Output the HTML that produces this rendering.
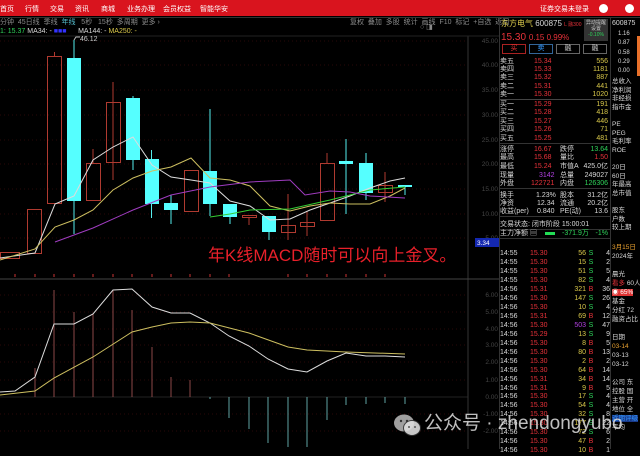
<!DOCTYPE html>
<html><head><meta charset="utf-8"><style>
*{margin:0;padding:0;box-sizing:border-box}
body{width:640px;height:449px;background:#000;position:relative;overflow:hidden;font-family:"Liberation Sans","Noto Sans CJK SC",sans-serif;color:#ccc;font-size:7px}
.a{position:absolute;white-space:nowrap;line-height:1}
.top{position:absolute;left:0;top:0;width:640px;height:16px;background:#d9141e}
.top span{position:absolute;top:4px;color:#fff;font-size:7px}
.r{color:#e8323a}.g{color:#2fd35a}.y{color:#d9c84a}.w{color:#d8d8d8}.gr{color:#8a8a8a}.p{color:#b040e0}
.row{position:absolute;left:500px;width:110px;height:9px}
.row span{position:absolute;top:0;line-height:9px;font-size:7px}
</style></head><body>
<div class="top">
<span style="left:0">首页</span><span style="left:25px">行情</span><span style="left:50px">交易</span><span style="left:75px">资讯</span><span style="left:101px">商城</span><span style="left:127px">业务办理</span><span style="left:163px">会员权益</span><span style="left:200px">智能华安</span>
<span style="left:540px">证券交易未登录</span>
<div style="position:absolute;top:4px;width:9px;height:9px;border-radius:50%;background:#fff;left:599px"></div>
<div style="position:absolute;top:4px;width:9px;height:9px;border-radius:50%;background:#fff;left:625px"></div>
</div>
<div class="a gr" style="left:0;top:19px">分钟 &nbsp;45日线 &nbsp;季线 &nbsp;<span style="color:#5bc">年线</span> &nbsp;&nbsp;5秒 &nbsp;&nbsp;15秒 &nbsp;多周期 &nbsp;更多 ›</div>
<div class="a gr" style="left:350px;top:19px">复权 &nbsp;叠加 &nbsp;多股 &nbsp;统计 &nbsp;画线 &nbsp;F10 &nbsp;标记 &nbsp;+自选 &nbsp;返回</div>
<div class="a" style="left:0;top:28px"><span class="g">1: 15.37</span> <span class="w">MA34: -</span> <span style="color:#33f">■■■</span> &nbsp;&nbsp;&nbsp;&nbsp;&nbsp;<span class="w">MA144: -</span> <span class="y">MA250: -</span></div>
<div style="position:absolute;left:0;top:17px;width:640px;height:1px;background:#333"></div>

<svg style="position:absolute;left:0;top:0" width="500" height="449">
<g stroke="#2a0808" stroke-dasharray="1 3">
<line x1="0" y1="41" x2="468" y2="41"/><line x1="0" y1="65" x2="468" y2="65"/><line x1="0" y1="90" x2="468" y2="90"/><line x1="0" y1="115" x2="468" y2="115"/><line x1="0" y1="140" x2="468" y2="140"/><line x1="0" y1="164" x2="468" y2="164"/><line x1="0" y1="189" x2="468" y2="189"/><line x1="0" y1="214" x2="468" y2="214"/><line x1="0" y1="238" x2="468" y2="238"/>
<line x1="0" y1="295" x2="468" y2="295"/><line x1="0" y1="312" x2="468" y2="312"/><line x1="0" y1="329" x2="468" y2="329"/><line x1="0" y1="345" x2="468" y2="345"/><line x1="0" y1="362" x2="468" y2="362"/><line x1="0" y1="380" x2="468" y2="380"/><line x1="0" y1="414" x2="468" y2="414"/><line x1="0" y1="431" x2="468" y2="431"/>
</g>
<line x1="0" y1="397" x2="468" y2="397" stroke="#222"/>
<line x1="468" y1="36" x2="468" y2="449" stroke="#333"/>
<line x1="0" y1="279" x2="500" y2="279" stroke="#444"/>
<line x1="0" y1="36" x2="500" y2="36" stroke="#222"/>
<g fill="none" stroke-width="1">
<g stroke="#b03a30">
<line x1="54.5" y1="52" x2="54.5" y2="56"/><line x1="113" y1="82" x2="113" y2="180"/><line x1="93" y1="149" x2="93" y2="163"/>
<line x1="249" y1="217" x2="249" y2="225"/><line x1="288" y1="194" x2="288" y2="240"/><line x1="307" y1="211" x2="307" y2="236"/><line x1="327" y1="153" x2="327" y2="163"/><line x1="385" y1="172" x2="385" y2="202"/>
</g>
<g stroke="#5ee">
<line x1="74" y1="40" x2="74" y2="234"/><line x1="133" y1="96" x2="133" y2="170"/><line x1="151.5" y1="150" x2="151.5" y2="218"/><line x1="171" y1="195" x2="171" y2="224"/><line x1="210" y1="109" x2="210" y2="216"/><line x1="230" y1="204" x2="230" y2="224"/><line x1="269" y1="216" x2="269" y2="240"/><line x1="346" y1="139" x2="346" y2="214"/><line x1="366" y1="153" x2="366" y2="200"/><line x1="405" y1="185" x2="405" y2="195"/>
</g>
<g stroke="#b03a30">
<rect x="0.5" y="252.5" width="19" height="6"/><rect x="27.5" y="209.5" width="14" height="44"/><rect x="47.5" y="56.5" width="14" height="147"/><rect x="86.5" y="163.5" width="14" height="37"/><rect x="106.5" y="102.5" width="14" height="60"/><rect x="184.5" y="170.5" width="14" height="41"/><rect x="242.5" y="215.5" width="14" height="2"/><rect x="281.5" y="225.5" width="14" height="7"/><rect x="300.5" y="222.5" width="14" height="4"/><rect x="320.5" y="163.5" width="14" height="57"/><rect x="378.5" y="185.5" width="14" height="7"/>
</g>
</g>
<g fill="#5ff">
<rect x="67" y="58" width="14" height="143"/><rect x="126" y="98" width="14" height="62"/><rect x="145" y="159" width="14" height="45"/><rect x="164" y="203" width="14" height="7"/><rect x="203" y="171" width="14" height="33"/><rect x="223" y="204" width="14" height="13"/><rect x="262" y="216" width="14" height="16"/><rect x="339" y="161" width="14" height="3"/><rect x="359" y="163" width="14" height="30"/><rect x="398" y="185" width="14" height="2"/>
</g>
<g fill="none" stroke-width="1">
<polyline stroke="#ddd" points="0,258 35,253 55,204 74,196 93,160 113,147 133,137 152,165 171,177 191,180 210,183 230,201 250,206 270,220 290,219 310,210 330,203 350,196 370,188 390,181 405,178"/>
<polyline stroke="#cdbf60" points="0,260 35,249 55,227 74,220 93,210 113,190 133,178 152,171 171,167 191,158 210,178 230,180 250,186 270,206 290,211 310,206 330,203 350,204 370,204 390,196 405,188"/>
<polyline stroke="#3c3" points="210,217 230,214 250,210 290,209 330,200 370,190 405,187"/>
<polyline stroke="#a03cc0" points="55,242 93,228 133,210 171,195 210,187 250,182 290,180 305,195 330,191 350,192 370,196 405,198"/>
</g>
<polyline fill="none" stroke="#bbb" points="74,40 76,37 80,37"/>
<text x="80" y="41" fill="#ccc" font-size="7" font-family="Liberation Sans">46.12</text>
<g stroke="#c33"><line x1="15" y1="274" x2="15" y2="277"/><line x1="35" y1="274" x2="35" y2="277"/><line x1="54" y1="274" x2="54" y2="277"/><line x1="74" y1="274" x2="74" y2="277"/><line x1="93" y1="274" x2="93" y2="277"/><line x1="113" y1="274" x2="113" y2="277"/><line x1="132" y1="274" x2="132" y2="277"/><line x1="152" y1="274" x2="152" y2="277"/><line x1="171" y1="274" x2="171" y2="277"/><line x1="190" y1="274" x2="190" y2="277"/><line x1="210" y1="274" x2="210" y2="277"/><line x1="229" y1="274" x2="229" y2="277"/><line x1="288" y1="274" x2="288" y2="277"/><line x1="307" y1="274" x2="307" y2="277"/><line x1="327" y1="274" x2="327" y2="277"/><line x1="346" y1="274" x2="346" y2="277"/><line x1="366" y1="274" x2="366" y2="277"/><line x1="385" y1="274" x2="385" y2="277"/></g>
<g stroke="#b05a5a" stroke-width="0.8"><line x1="35" y1="397" x2="35" y2="368"/><line x1="54" y1="397" x2="54" y2="290"/><line x1="74" y1="397" x2="74" y2="312"/><line x1="93" y1="397" x2="93" y2="314"/><line x1="113" y1="397" x2="113" y2="290"/><line x1="132" y1="397" x2="132" y2="310"/><line x1="152" y1="397" x2="152" y2="347"/><line x1="171" y1="397" x2="171" y2="377"/><line x1="190" y1="397" x2="190" y2="380"/></g>
<g stroke="#7cc" stroke-width="0.8"><line x1="210" y1="397" x2="210" y2="399"/><line x1="229" y1="397" x2="229" y2="418"/><line x1="249" y1="397" x2="249" y2="429"/><line x1="268" y1="397" x2="268" y2="443"/><line x1="288" y1="397" x2="288" y2="447"/><line x1="307" y1="397" x2="307" y2="447"/><line x1="327" y1="397" x2="327" y2="420"/><line x1="346" y1="397" x2="346" y2="405"/><line x1="366" y1="397" x2="366" y2="404"/><line x1="385" y1="397" x2="385" y2="403"/><line x1="405" y1="397" x2="405" y2="404"/></g>
<polyline fill="none" stroke="#ddd" points="0,392 15,391 35,377 54,324 74,324 93,314 113,290 132,289 152,307 171,313 190,313 210,323 229,336 249,346 268,359 288,369 307,372 327,361 346,353 366,356 385,356 405,357"/>
<polyline fill="none" stroke="#cdbf60" points="0,395 35,391 54,378 93,357 132,332 152,327 171,323 190,322 210,323 249,333 288,347 307,350 346,352 405,354"/>
<g fill="#444" font-size="6.5" font-family="Liberation Sans" text-anchor="end">
<text x="498" y="43">45.00</text><text x="498" y="67">40.00</text><text x="498" y="92">35.00</text><text x="498" y="117">30.00</text><text x="498" y="142">25.00</text><text x="498" y="166">20.00</text><text x="498" y="191">15.00</text><text x="498" y="216">10.00</text><text x="498" y="240">5.00</text>
<text x="498" y="297">6.00</text><text x="498" y="314">5.00</text><text x="498" y="331">4.00</text><text x="498" y="347">3.00</text><text x="498" y="364">2.00</text><text x="498" y="382">1.00</text><text x="498" y="399">0.00</text><text x="498" y="416">-1.00</text><text x="498" y="433">-2.00</text>
</g>
<rect x="475" y="238" width="24" height="9" fill="#1428b0"/>
<text x="477" y="245" fill="#fff" font-size="6.5" font-family="Liberation Sans">3.34</text>
<text x="208" y="261" fill="#e8202a" font-size="17" font-family="Liberation Sans,Noto Sans CJK SC,sans-serif">年K线MACD随时可以向上金叉。</text>
<text x="420" y="29" fill="#888" font-size="7">○ ◨</text>
</svg>

<div style="position:absolute;left:499px;top:17px;width:1px;height:432px;background:#333"></div>
<div style="position:absolute;left:610px;top:17px;width:1px;height:432px;background:#333"></div>
<div class="a" style="left:501px;top:20px;font-size:8px"><span class="y">东方电气</span> <span class="w">600875</span> <span class="r" style="font-size:5px">L 融300</span></div>
<div class="a r" style="left:501px;top:33px;font-size:10px">15.30 <span style="font-size:8px">0.15 0.99%</span></div>
<div style="position:absolute;left:584px;top:19px;width:24px;height:22px;background:#333;color:#ccc;font-size:5px;text-align:center;line-height:6px;padding-top:1px">异动提醒<br>设置<br><span class="g">-0.10%</span></div>
<div style="position:absolute;left:502px;top:44px;width:24px;height:10px;border:1px solid #a22;color:#e33;text-align:center;font-size:7px;line-height:8px">买</div>
<div style="position:absolute;left:529px;top:44px;width:24px;height:10px;border:1px solid #369;color:#39f;text-align:center;font-size:7px;line-height:8px">卖</div>
<div style="position:absolute;left:556px;top:44px;width:24px;height:10px;border:1px solid #666;color:#ccc;text-align:center;font-size:7px;line-height:8px">融</div>
<div style="position:absolute;left:583px;top:44px;width:24px;height:10px;border:1px solid #666;color:#ccc;text-align:center;font-size:7px;line-height:8px">融</div>

<div style="position:absolute;left:500px;top:99px;width:110px;height:1px;background:#444"></div>
<div style="position:absolute;left:500px;top:143px;width:110px;height:1px;background:#333"></div>
<div style="position:absolute;left:500px;top:188px;width:110px;height:1px;background:#333"></div>
<div style="position:absolute;left:500px;top:216px;width:110px;height:1px;background:#333"></div>
<div style="position:absolute;left:500px;top:229px;width:110px;height:1px;background:#333"></div>
<div style="position:absolute;left:500px;top:238px;width:110px;height:1px;background:#333"></div>

<div class="row" style="top:57px"><span class="w">卖五</span><span class="r" style="left:34px">15.34</span><span class="y" style="right:2px">556</span></div>
<div class="row" style="top:65px"><span class="w">卖四</span><span class="r" style="left:34px">15.33</span><span class="y" style="right:2px">1181</span></div>
<div class="row" style="top:73px"><span class="w">卖三</span><span class="r" style="left:34px">15.32</span><span class="y" style="right:2px">887</span></div>
<div class="row" style="top:82px"><span class="w">卖二</span><span class="r" style="left:34px">15.31</span><span class="y" style="right:2px">441</span></div>
<div class="row" style="top:90px"><span class="w">卖一</span><span class="r" style="left:34px">15.30</span><span class="y" style="right:2px">1020</span></div>
<div class="row" style="top:100px"><span class="w">买一</span><span class="r" style="left:34px">15.29</span><span class="y" style="right:2px">191</span></div>
<div class="row" style="top:108px"><span class="w">买二</span><span class="r" style="left:34px">15.28</span><span class="y" style="right:2px">418</span></div>
<div class="row" style="top:117px"><span class="w">买三</span><span class="r" style="left:34px">15.27</span><span class="y" style="right:2px">446</span></div>
<div class="row" style="top:125px"><span class="w">买四</span><span class="r" style="left:34px">15.26</span><span class="y" style="right:2px">71</span></div>
<div class="row" style="top:134px"><span class="w">买五</span><span class="r" style="left:34px">15.25</span><span class="y" style="right:2px">481</span></div>
<div class="row" style="top:145px"><span class="w">涨停</span><span class="r" style="left:34px">16.67</span><span class="w" style="left:60px">跌停</span><span class="g" style="right:2px">13.64</span></div>
<div class="row" style="top:153px"><span class="w">最高</span><span class="r" style="left:34px">15.68</span><span class="w" style="left:60px">量比</span><span class="r" style="right:2px">1.50</span></div>
<div class="row" style="top:162px"><span class="w">最低</span><span class="r" style="left:34px">15.24</span><span class="w" style="left:60px">市值A</span><span class="w" style="right:2px">425.0亿</span></div>
<div class="row" style="top:171px"><span class="w">现量</span><span class="p" style="left:39px">3142</span><span class="w" style="left:60px">总量</span><span class="w" style="right:2px">249027</span></div>
<div class="row" style="top:179px"><span class="w">外盘</span><span class="r" style="left:31px">122721</span><span class="w" style="left:60px">内盘</span><span class="g" style="right:2px">126306</span></div>
<div class="row" style="top:191px"><span class="w">换手</span><span class="w" style="left:36px">1.23%</span><span class="w" style="left:60px">股本</span><span class="w" style="right:2px">31.2亿</span></div>
<div class="row" style="top:199px"><span class="w">净资</span><span class="w" style="left:37px">12.34</span><span class="w" style="left:60px">流通</span><span class="w" style="right:2px">20.2亿</span></div>
<div class="row" style="top:207px"><span class="w">收益(per)</span><span class="w" style="left:37px">0.840</span><span class="w" style="left:60px">PE(动)</span><span class="w" style="right:2px">13.6</span></div>
<div class="row" style="top:220px"><span class="w">交易状态: 闭市阶段 15:00:01</span></div>
<div class="row" style="top:229px"><span class="w">主力净额 ▤</span><span style="left:45px;top:3px;width:10px;height:3px;background:#2d5;display:block"></span><span class="g" style="left:62px">-371.9万</span><span class="g" style="right:2px">-1%</span></div>

<div style="position:absolute;left:637px;top:36px;width:3px;height:40px;background:#e8702a"></div>
<div class="a w" style="left:612px;top:20px">600875</div>
<div class="a w" style="left:618px;top:30px;font-size:6px;line-height:9.3px;white-space:pre">1.16
0.87
0.58
0.29
0.00</div>
<div class="a w" style="left:612px;top:78px;font-size:6.5px;line-height:8.6px;white-space:pre">总收入
净利润
非经损
指市金
 
PE
PEG
毛利率
ROE
 
20日
60日
年最高
总市值
 
股东
户数
较上期</div>

<div class="a" style="left:612px;top:243px;font-size:6.5px;line-height:9px;white-space:pre"><span style="color:#e8a030">3月15日</span>
<span class="w">2024年</span>
 
<span class="w">晨光</span>
<span class="r">看多</span> <span class="w">60人</span>
<span style="background:#d33;color:#fff">◉ 65%</span>
<span class="w">基金</span>
<span class="w">分红 72</span>
<span class="w">融资占比</span>
 
<span class="w">日期</span>
<span style="color:#e8a030">03-14</span>
<span class="w">03-13</span>
<span class="w">03-12</span>
 
<span class="w">公司 东</span>
<span class="w">控股 国</span>
<span class="w">主营 开</span>
<span class="w">地位 全</span>
<span style="background:#1a3a8a;color:#39f">近期评级</span>
<span class="w">平均</span></div>

<div class="a" style="left:500px;top:241px;font-size:7px;line-height:8.97px;white-space:pre;width:110px">
<div style="display:grid;grid-template-columns:30px 28px 28px 10px 14px;">
<span class="w">14:55</span><span class="r">15.30</span><span class="y" style="text-align:right">56</span><span class="g" style="text-align:center">S</span><span class="w" style="text-align:right">4</span>
<span class="w">14:55</span><span class="r">15.30</span><span class="y" style="text-align:right">15</span><span class="g" style="text-align:center">S</span><span class="w" style="text-align:right">2</span>
<span class="w">14:55</span><span class="r">15.30</span><span class="y" style="text-align:right">51</span><span class="g" style="text-align:center">S</span><span class="w" style="text-align:right">5</span>
<span class="w">14:55</span><span class="r">15.30</span><span class="y" style="text-align:right">82</span><span class="g" style="text-align:center">S</span><span class="w" style="text-align:right">4</span>
<span class="w">14:56</span><span class="r">15.31</span><span class="y" style="text-align:right">321</span><span class="r" style="text-align:center">B</span><span class="w" style="text-align:right">36</span>
<span class="w">14:56</span><span class="r">15.30</span><span class="y" style="text-align:right">147</span><span class="g" style="text-align:center">S</span><span class="w" style="text-align:right">26</span>
<span class="w">14:56</span><span class="r">15.30</span><span class="y" style="text-align:right">10</span><span class="g" style="text-align:center">S</span><span class="w" style="text-align:right">4</span>
<span class="w">14:56</span><span class="r">15.31</span><span class="y" style="text-align:right">69</span><span class="r" style="text-align:center">B</span><span class="w" style="text-align:right">12</span>
<span class="w">14:56</span><span class="r">15.30</span><span class="p" style="text-align:right">503</span><span class="g" style="text-align:center">S</span><span class="w" style="text-align:right">47</span>
<span class="w">14:56</span><span class="r">15.29</span><span class="y" style="text-align:right">13</span><span class="g" style="text-align:center">S</span><span class="w" style="text-align:right">9</span>
<span class="w">14:56</span><span class="r">15.30</span><span class="y" style="text-align:right">8</span><span class="r" style="text-align:center">B</span><span class="w" style="text-align:right">5</span>
<span class="w">14:56</span><span class="r">15.30</span><span class="y" style="text-align:right">80</span><span class="r" style="text-align:center">B</span><span class="w" style="text-align:right">13</span>
<span class="w">14:56</span><span class="r">15.30</span><span class="y" style="text-align:right">2</span><span class="r" style="text-align:center">B</span><span class="w" style="text-align:right">2</span>
<span class="w">14:56</span><span class="r">15.30</span><span class="y" style="text-align:right">64</span><span class="r" style="text-align:center">B</span><span class="w" style="text-align:right">14</span>
<span class="w">14:56</span><span class="r">15.31</span><span class="y" style="text-align:right">34</span><span class="r" style="text-align:center">B</span><span class="w" style="text-align:right">14</span>
<span class="w">14:56</span><span class="r">15.31</span><span class="y" style="text-align:right">9</span><span class="r" style="text-align:center">B</span><span class="w" style="text-align:right">5</span>
<span class="w">14:56</span><span class="r">15.30</span><span class="y" style="text-align:right">17</span><span class="g" style="text-align:center">S</span><span class="w" style="text-align:right">4</span>
<span class="w">14:56</span><span class="r">15.30</span><span class="y" style="text-align:right">54</span><span class="g" style="text-align:center">S</span><span class="w" style="text-align:right">4</span>
<span class="w">14:56</span><span class="r">15.30</span><span class="y" style="text-align:right">32</span><span class="g" style="text-align:center">S</span><span class="w" style="text-align:right">8</span>
<span class="w">14:56</span><span class="r">15.30</span><span class="y" style="text-align:right">177</span><span class="g" style="text-align:center">S</span><span class="w" style="text-align:right">22</span>
<span class="w">14:56</span><span class="r">15.30</span><span class="y" style="text-align:right">72</span><span class="g" style="text-align:center">S</span><span class="w" style="text-align:right">6</span>
<span class="w">14:56</span><span class="r">15.30</span><span class="y" style="text-align:right">47</span><span class="r" style="text-align:center">B</span><span class="w" style="text-align:right">2</span>
<span class="w">14:56</span><span class="r">15.30</span><span class="y" style="text-align:right">10</span><span class="r" style="text-align:center">B</span><span class="w" style="text-align:right">1</span>
</div></div>

<svg style="position:absolute;left:393px;top:412px" width="30" height="26"><ellipse cx="11" cy="11" rx="10" ry="8.5" fill="#bbb" opacity=".85"/><ellipse cx="19" cy="16" rx="8.5" ry="7.5" fill="#ddd" opacity=".9" stroke="#333" stroke-width="1"/><circle cx="8" cy="9" r="1.2" fill="#333"/><circle cx="14" cy="9" r="1.2" fill="#333"/><circle cx="16" cy="15" r="1" fill="#555"/><circle cx="22" cy="15" r="1" fill="#555"/></svg>
<div class="a" style="left:424px;top:414px;font-size:19px;color:rgba(225,225,225,.85)">公众号 · zhendongyubo</div>
</body></html>
